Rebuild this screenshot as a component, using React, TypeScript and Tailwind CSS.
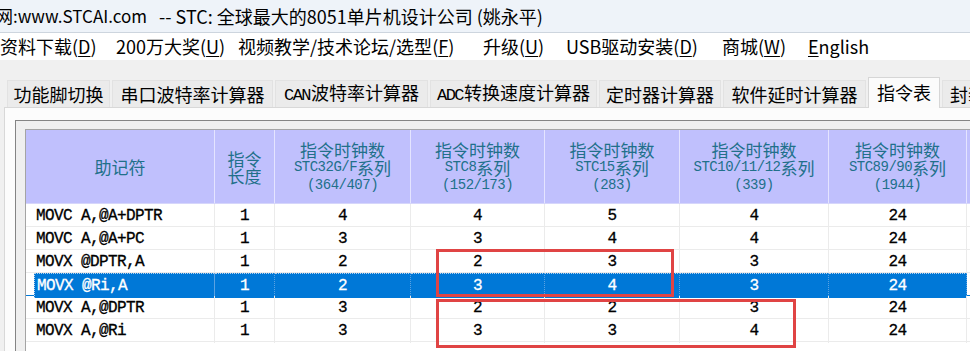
import React from "react";

type Row = string[];

const rows: Row[] = [
  ["MOVC A,@A+DPTR", "1", "4", "4", "5", "4", "24"],
  ["MOVC A,@A+PC", "1", "3", "3", "4", "4", "24"],
  ["MOVX @DPTR,A", "1", "2", "2", "3", "3", "24"],
  ["MOVX @Ri,A", "1", "2", "3", "4", "3", "24"],
  ["MOVX A,@DPTR", "1", "3", "2", "2", "3", "24"],
  ["MOVX A,@Ri", "1", "3", "3", "3", "4", "24"],
];

const SELECTED = 3;

const gridCols =
  "grid grid-cols-[189px_60px_136px_134px_135px_149px_138px]";

function Lat({ children }: { children: React.ReactNode }) {
  return (
    <span className="font-['Liberation_Mono',monospace] text-[14px] tracking-[-0.5px] leading-[18px]">
      {children}
    </span>
  );
}

function Key({ k }: { k: string }) {
  return (
    <>
      (<span className="underline underline-offset-2">{k}</span>)
    </>
  );
}

function HeadCell({
  series,
  count,
}: {
  series: React.ReactNode;
  count: string;
}) {
  return (
    <div className="flex flex-col items-center justify-center border-r border-[#e4e4ff] pt-[1px]">
      <div className="h-[18px] leading-[18px] flex items-center">指令时钟数</div>
      <div className="h-[17px] leading-[17px] flex items-center">{series}</div>
      <div className="h-[18px] leading-[18px] flex items-center">
        <Lat>({count})</Lat>
      </div>
    </div>
  );
}

const tabs: { label: React.ReactNode; w: string }[] = [
  { label: "功能脚切换", w: "w-[103px]" },
  { label: "串口波特率计算器", w: "w-[161px]" },
  {
    label: (
      <>
        <span className="font-['Liberation_Mono',monospace] text-[17px] tracking-[-1.5px] mr-[1px]">
          CAN
        </span>
        波特率计算器
      </>
    ),
    w: "w-[153px]",
  },
  {
    label: (
      <>
        <span className="font-['Liberation_Mono',monospace] text-[17px] tracking-[-1.5px] mr-[1px]">
          ADC
        </span>
        转换速度计算器
      </>
    ),
    w: "w-[167px]",
  },
  { label: "定时器计算器", w: "w-[122px]" },
  { label: "软件延时计算器", w: "w-[143px]" },
];

const menu: { label: React.ReactNode; w: string }[] = [
  {
    label: (
      <>
        资料下载<Key k="D" />
      </>
    ),
    w: "w-[116px]",
  },
  {
    label: (
      <>
        200万大奖<Key k="U" />
      </>
    ),
    w: "w-[122px]",
  },
  {
    label: (
      <>
        视频教学/技术论坛/选型<Key k="F" />
      </>
    ),
    w: "w-[245px]",
  },
  {
    label: (
      <>
        升级<Key k="U" />
      </>
    ),
    w: "w-[83px]",
  },
  {
    label: (
      <>
        USB驱动安装<Key k="D" />
      </>
    ),
    w: "w-[156px]",
  },
  {
    label: (
      <>
        商城<Key k="W" />
      </>
    ),
    w: "w-[86px]",
  },
  {
    label: (
      <>
        <span className="underline underline-offset-2">E</span>nglish
      </>
    ),
    w: "w-[80px]",
  },
];

export default function App() {
  return (
    <div className="relative w-[970px] h-[351px] overflow-hidden bg-[#f0f0f0] text-black font-['Noto_Sans_CJK_SC',sans-serif]">
      {/* title bar */}
      <div className="h-[33px] bg-[#eef3f9] border-b border-[#cdd5de] flex items-center whitespace-nowrap text-[17px]">
        <span className="ml-[-4px]">网:www.STCAI.com</span>
        <span className="ml-[12px] text-[18px]">
          -- STC: 全球最大的8051单片机设计公司 (姚永平)
        </span>
      </div>

      {/* menu */}
      <div className="h-[27px] bg-white flex items-center whitespace-nowrap text-[18px]">
        {menu.map((m, i) => (
          <span key={i} className={`${m.w} shrink-0`}>
            {m.label}
          </span>
        ))}
      </div>

      <div className="h-[17px]" />

      {/* tabs */}
      <div className="h-[30px] flex items-end gap-[2px] pl-[7px] whitespace-nowrap text-[18px]">
        {tabs.map((t, i) => (
          <div
            key={i}
            className={`${t.w} h-[27px] shrink-0 flex items-center justify-center bg-[#ebebeb] border border-b-0 border-[#e2e2e2]`}
          >
            <span className="leading-[20px]">{t.label}</span>
          </div>
        ))}
        <div className="relative z-10 w-[72px] h-[31px] mb-[-1px] shrink-0 flex items-center justify-center pb-[2px] bg-[#fbfbfb] border border-b-0 border-[#d6d6d6]">
          指令表
        </div>
        <div className="w-[60px] h-[27px] shrink-0 flex items-center pl-[7px] bg-[#ebebeb] border border-b-0 border-[#e2e2e2]">
          封装
        </div>
      </div>

      {/* tab panel */}
      <div className="ml-[4px] h-[260px] bg-[#fcfcfc] border-l border-t border-[#d8d8d8] pt-[12px] pl-[10px]">
        <div className="h-[300px] w-[1000px] border border-[#848484] bg-[#efefef] pl-[9px] pt-[8px]">
          <div className="border-l border-t border-[#a4a4a4] bg-white w-[980px] h-[300px]">
            {/* header */}
            <div
              className={`${gridCols} h-[74px] bg-[#c0c0fd] border-b border-[#d6d6fb] text-[#21708a] text-[17px] text-center`}
            >
              <div className="flex items-center justify-center border-r border-[#e4e4ff]">
                助记符
              </div>
              <div className="flex flex-col items-center justify-center border-r border-[#e4e4ff]">
                <div className="h-[17px] leading-[17px]">指令</div>
                <div className="h-[17px] leading-[17px]">长度</div>
              </div>
              <HeadCell
                series={
                  <>
                    <Lat>STC32G/F</Lat>系列
                  </>
                }
                count="364/407"
              />
              <HeadCell
                series={
                  <>
                    <Lat>STC8</Lat>系列
                  </>
                }
                count="152/173"
              />
              <HeadCell
                series={
                  <>
                    <Lat>STC15</Lat>系列
                  </>
                }
                count="283"
              />
              <HeadCell
                series={
                  <>
                    <Lat>STC10/11/12</Lat>系列
                  </>
                }
                count="339"
              />
              <HeadCell
                series={
                  <>
                    <Lat>STC89/90</Lat>系列
                  </>
                }
                count="1944"
              />
            </div>

            {/* rows */}
            {rows.map((r, ri) => {
              const sel = ri === SELECTED;
              return (
                <div
                  key={ri}
                  className={`${gridCols} h-[23px] border-b ${
                    sel ? "border-[#0078d7]" : "border-[#ebebeb]"
                  } font-['Liberation_Mono',monospace] text-[16px] tracking-[-0.6px] [-webkit-text-stroke:0.3px_currentColor]`}
                >
                  {r.map((c, ci) =>
                    ci === 0 ? (
                      <div
                        key={ci}
                        className={`flex items-center border-r ${
                          sel ? "border-[#5aa2e2]" : "border-[#ebebeb]"
                        }`}
                      >
                        {sel ? (
                          <div className="ml-[8px] h-full flex-1 flex items-center pl-[2px] bg-[#0078d7] text-white border-l border-t border-dotted border-[#bcd3ea]">
                            {c}
                          </div>
                        ) : (
                          <span className="pl-[10px]">{c}</span>
                        )}
                      </div>
                    ) : (
                      <div
                        key={ci}
                        className={`flex items-center justify-center border-r ${
                          sel
                            ? "bg-[#0078d7] text-white border-[#5aa2e2] border-t border-t-[#bcd3ea] border-dotted"
                            : "border-[#ebebeb]"
                        }`}
                      >
                        {c}
                      </div>
                    )
                  )}
                </div>
              );
            })}
          </div>
        </div>
      </div>

      {/* red annotation boxes */}
      <div className="absolute left-[436px] top-[249px] w-[238px] h-[48px] border-[3px] border-[#e04444]" />
      <div className="absolute left-[436px] top-[299px] w-[360px] h-[49px] border-[3px] border-[#e04444]" />
    </div>
  );
}
